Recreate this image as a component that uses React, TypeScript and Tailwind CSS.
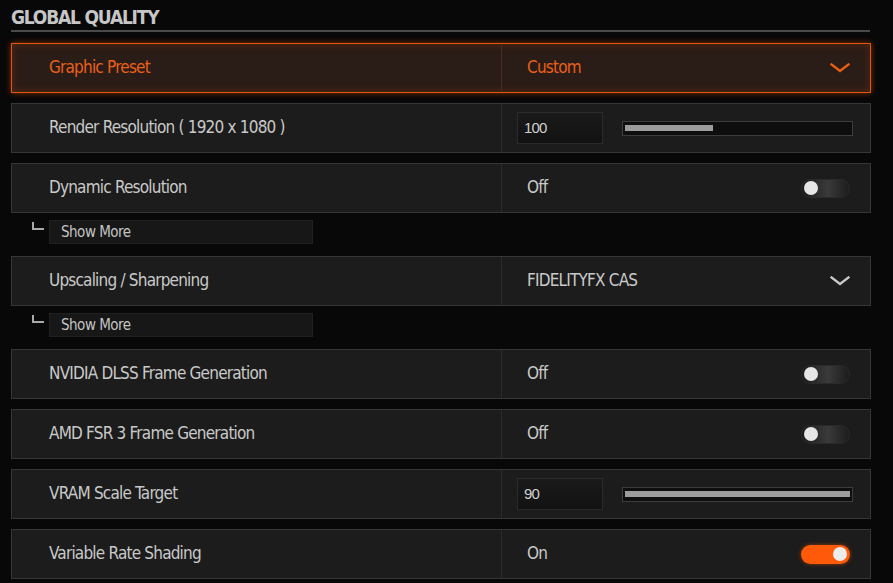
const font = "font-['DejaVu_Sans_Condensed','DejaVu_Sans',sans-serif]";

type Row =
  | { kind: "select"; label: string; value: string; active?: boolean }
  | { kind: "slider"; label: string; value: number }
  | { kind: "toggle"; label: string; on: boolean; more?: boolean };

function Chevron({ active }: { active?: boolean }) {
  return (
    <svg width="20" height="10" viewBox="0 0 20 10" className="shrink-0">
      <path
        d="M1.5 1.5 L10 8 L18.5 1.5"
        fill="none"
        stroke={active ? "#ea5f16" : "#c9c9c9"}
        strokeWidth="2.4"
        strokeLinecap="square"
      />
    </svg>
  );
}

function Toggle({ on }: { on: boolean }) {
  if (on) {
    return (
      <div className="flex h-[19px] w-[49px] items-center justify-end rounded-full bg-[#ff5a0a] pr-[3px] shadow-[0_0_4px_rgba(255,90,10,0.5)]">
        <span className="size-[14px] rounded-full bg-[#ececec]" />
      </div>
    );
  }
  return (
    <div className="flex h-[19px] w-[49px] items-center rounded-full border border-[#2a2a2a] bg-[linear-gradient(90deg,#1a1a1a_0%,#3a3a3a_55%,#1c1c1c_100%)] pl-[2px]">
      <span className="size-[14px] rounded-full bg-[#e6e6e6]" />
    </div>
  );
}

function Slider({ value }: { value: number }) {
  return (
    <div className="flex items-center gap-[19px]">
      <div className="flex h-[32px] w-[86px] items-center border border-[#2b2b2b] bg-[linear-gradient(180deg,#1a1a1a,#121212)] pl-[6px] font-['Liberation_Sans',sans-serif] text-[15px] text-[#cfcfcf]">
        {value}
      </div>
      <div className="flex h-[15px] w-[231px] items-center border border-[#3d3d3d] bg-[#0e0e0e] px-[2px]">
        <div className="h-[6px] bg-[#9c9c9c]" style={{ width: `${value === 100 ? 88 : 225}px` }} />
      </div>
    </div>
  );
}

function SettingRow({ row }: { row: Row }) {
  const active = row.kind === "select" && row.active;
  return (
    <div
      className={
        active
          ? "grid h-[50px] grid-cols-[489px_1fr] border border-[#e3540e] bg-[#2a1c16] shadow-[0_0_6px_rgba(230,85,15,0.55),inset_0_0_8px_rgba(230,85,15,0.25)]"
          : "grid h-[50px] grid-cols-[489px_1fr] border border-[#363636] bg-[#1c1c1c]"
      }
    >
      <div
        className={`flex items-center pl-[37px] text-[17px] tracking-[-0.8px] ${
          active ? "text-[#ea6019]" : "text-[#c9c9c9]"
        }`}
      >
        {row.label}
      </div>
      <div
        className={`flex items-center justify-between border-l pr-[20px] text-[17px] tracking-[-0.8px] ${
          active ? "border-[#4a2a1a]" : "border-[#2c2c2c]"
        } ${row.kind === "slider" ? "pl-[15px]" : "pl-[25px]"}`}
      >
        {row.kind === "select" && (
          <>
            <span className={active ? "text-[#ea6019]" : "text-[#c9c9c9]"}>{row.value}</span>
            <Chevron active={active} />
          </>
        )}
        {row.kind === "toggle" && (
          <>
            <span className="text-[#c9c9c9]">{row.on ? "On" : "Off"}</span>
            <Toggle on={row.on} />
          </>
        )}
        {row.kind === "slider" && <Slider value={row.value} />}
      </div>
    </div>
  );
}

function ShowMore() {
  return (
    <div className="mt-[7px] mb-[12px] flex h-[24px] items-start">
      <div className="ml-[21px] mt-[2px] h-[8px] w-[12px] border-b-2 border-l-2 border-[#a9a9a9]" />
      <div className="ml-[5px] flex h-[24px] w-[264px] items-center border border-[#202020] bg-[#171717] pl-[11px] text-[15px] tracking-[-0.5px] text-[#c4c4c4]">
        Show More
      </div>
    </div>
  );
}

const rows: Row[] = [
  { kind: "select", label: "Graphic Preset", value: "Custom", active: true },
  { kind: "slider", label: "Render Resolution ( 1920 x 1080 )", value: 100 },
  { kind: "toggle", label: "Dynamic Resolution", on: false, more: true },
  { kind: "select", label: "Upscaling / Sharpening", value: "FIDELITYFX CAS" },
  { kind: "toggle", label: "NVIDIA DLSS Frame Generation", on: false },
  { kind: "toggle", label: "AMD FSR 3 Frame Generation", on: false },
  { kind: "slider", label: "VRAM Scale Target", value: 90 },
  { kind: "toggle", label: "Variable Rate Shading", on: true },
];

export default function App() {
  return (
    <div className={`h-[583px] w-[893px] overflow-hidden bg-[#080808] ${font}`}>
      <div className="w-[871px] pl-[11px]">
        <div className="pt-[8px] text-[19px] font-bold leading-[19px] tracking-[-1.2px] text-[#c6c6c6]">
          GLOBAL QUALITY
        </div>
        <div className="mt-[3px] h-[2px] w-[859px] bg-[#4a4a4a]" />
        <div className="mt-[11px] flex flex-col">
          {rows.map((row, i) => (
            <div key={row.label}>
              <SettingRow row={row} />
              {i === 2 || i === 3 ? <ShowMore /> : <div className="h-[10px]" />}
            </div>
          ))}
        </div>
      </div>
    </div>
  );
}
